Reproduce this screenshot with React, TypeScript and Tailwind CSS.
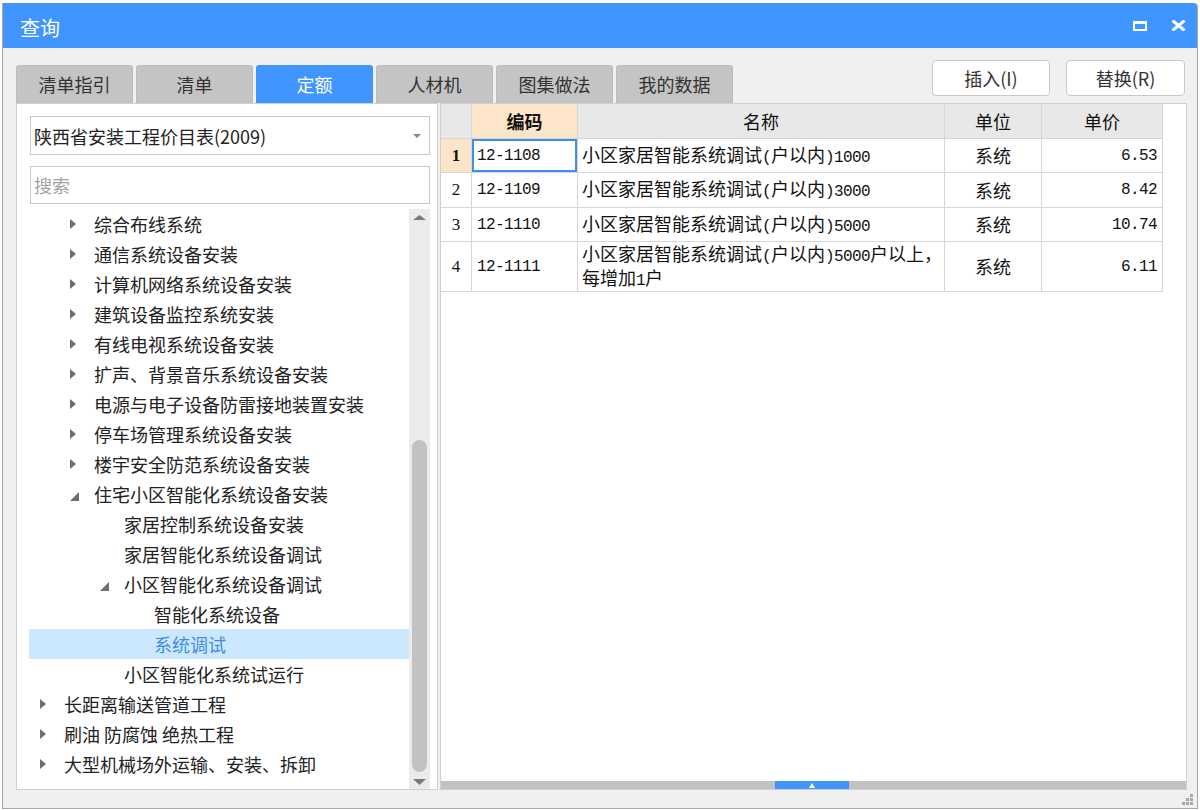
import React from 'react';

// Query dialog: 定额 tab with tree on the left and result grid on the right.

type TreeNode = {
  label: string;
  level: 0 | 1 | 2 | 3;
  state: 'collapsed' | 'expanded' | 'leaf';
  selected?: boolean;
};

const TABS = ['清单指引', '清单', '定额', '人材机', '图集做法', '我的数据'];
const ACTIVE_TAB = 2;

const TREE: TreeNode[] = [
  { label: '综合布线系统', level: 1, state: 'collapsed' },
  { label: '通信系统设备安装', level: 1, state: 'collapsed' },
  { label: '计算机网络系统设备安装', level: 1, state: 'collapsed' },
  { label: '建筑设备监控系统安装', level: 1, state: 'collapsed' },
  { label: '有线电视系统设备安装', level: 1, state: 'collapsed' },
  { label: '扩声、背景音乐系统设备安装', level: 1, state: 'collapsed' },
  { label: '电源与电子设备防雷接地装置安装', level: 1, state: 'collapsed' },
  { label: '停车场管理系统设备安装', level: 1, state: 'collapsed' },
  { label: '楼宇安全防范系统设备安装', level: 1, state: 'collapsed' },
  { label: '住宅小区智能化系统设备安装', level: 1, state: 'expanded' },
  { label: '家居控制系统设备安装', level: 2, state: 'leaf' },
  { label: '家居智能化系统设备调试', level: 2, state: 'leaf' },
  { label: '小区智能化系统设备调试', level: 2, state: 'expanded' },
  { label: '智能化系统设备', level: 3, state: 'leaf' },
  { label: '系统调试', level: 3, state: 'leaf', selected: true },
  { label: '小区智能化系统试运行', level: 2, state: 'leaf' },
  { label: '长距离输送管道工程', level: 0, state: 'collapsed' },
  { label: '刷油 防腐蚀 绝热工程', level: 0, state: 'collapsed' },
  { label: '大型机械场外运输、安装、拆卸', level: 0, state: 'collapsed' },
];

const INDENT = ['pl-[11px]', 'pl-[41px]', 'pl-[71px]', 'pl-[101px]'];

const ROWS = [
  { no: '1', code: '12-1108', name: ['小区家居智能系统调试(户以内)1000'], unit: '系统', price: '6.53', h: 'h-[34px]' },
  { no: '2', code: '12-1109', name: ['小区家居智能系统调试(户以内)3000'], unit: '系统', price: '8.42', h: 'h-[35px]' },
  { no: '3', code: '12-1110', name: ['小区家居智能系统调试(户以内)5000'], unit: '系统', price: '10.74', h: 'h-[34px]' },
  { no: '4', code: '12-1111', name: ['小区家居智能系统调试(户以内)5000户以上，', '每增加1户'], unit: '系统', price: '6.11', h: 'h-[50px]' },
];

// SimSun-style mix: half-width latin runs, full-width CJK
function Mix({ text }: { text: string }) {
  const parts = text.split(/([\x20-\x7e]+)/).filter(Boolean);
  return (
    <>
      {parts.map((p, i) =>
        /^[\x20-\x7e]+$/.test(p) ? (
          <span key={i} className="font-['Liberation_Mono',monospace] text-[16px] tracking-[-0.6px]">{p}</span>
        ) : (
          <span key={i}>{p}</span>
        ),
      )}
    </>
  );
}

function Caret({ state }: { state: TreeNode['state'] }) {
  if (state === 'collapsed') {
    return (
      <svg width="6" height="10" viewBox="0 0 6 10">
        <path d="M0 0 L6 5 L0 10 Z" fill="#6e6e6e" />
      </svg>
    );
  }
  if (state === 'expanded') {
    return (
      <svg width="9" height="9" viewBox="0 0 9 9" className="mt-[5px]">
        <path d="M9 0 L9 9 L0 9 Z" fill="#6e6e6e" />
      </svg>
    );
  }
  return null;
}

function TitleBar() {
  return (
    <div className="h-[45px] bg-[#4096fe] flex items-center pl-[17px] pr-[11px] rounded-tr-[4px]">
      <span className="text-white text-[20px] leading-none mt-[4px]">查询</span>
      <div className="ml-auto flex items-center gap-[24px]">
        <div className="w-[14px] h-[10px] border-2 border-t-[3px] border-white" />
        <svg width="15" height="11" viewBox="0 0 15 11">
          <path d="M1.5 0.5 L13.5 10.5 M13.5 0.5 L1.5 10.5" stroke="#fff" strokeWidth="3" />
        </svg>
      </div>
    </div>
  );
}

function Tabs() {
  return (
    <div className="h-[55px] flex items-end mr-[2px]">
      <div className="flex gap-[3px]">
        {TABS.map((t, i) => (
          <div
            key={t}
            className={`w-[117px] h-[38px] rounded-t-[3px] flex items-center justify-center text-[18px] leading-none pb-[1px] ${
              i === ACTIVE_TAB ? 'bg-[#4096fe] text-white' : 'bg-[#c4c4c4] text-[#333] border border-b-0 border-[#bdbdbd]'
            }`}
          >
            {t}
          </div>
        ))}
      </div>
      <div className="ml-auto self-start mt-[12px] flex gap-[16px]">
        <button className="w-[118px] h-[36px] bg-white border border-[#c9c9c9] rounded-[4px] text-[18px] text-[#333] leading-none">
          插入(I)
        </button>
        <button className="w-[119px] h-[36px] bg-white border border-[#c9c9c9] rounded-[4px] text-[18px] text-[#333] leading-none">
          替换(R)
        </button>
      </div>
    </div>
  );
}

function Scrollbar() {
  return (
    <div className="w-[21px] h-full bg-[#ebebeb] flex flex-col">
      <div className="h-[20px] flex justify-center pt-[6px]">
        <svg width="13" height="5" viewBox="0 0 13 5">
          <path d="M0 5 L6.5 0 L13 5 Z" fill="#7a7a7a" />
        </svg>
      </div>
      <div className="flex-1 flex flex-col justify-end items-center">
        <div className="w-[15px] h-[332px] rounded-full bg-[#c2c2c2]" />
      </div>
      <div className="h-[17px] flex justify-center pt-[7px]">
        <svg width="13" height="6" viewBox="0 0 13 6">
          <path d="M0 0 L13 0 L6.5 6 Z" fill="#7a7a7a" />
        </svg>
      </div>
    </div>
  );
}

function LeftPanel() {
  return (
    <div className="w-[422px] h-full bg-white border border-[#cfcfcf] flex flex-col pl-[12px]">
      <div className="ml-[1px] mt-[12px] w-[400px] h-[39px] border border-[#c8c8c8] flex items-center pl-[3px] pr-[8px]">
        <span className="text-[18px] text-[#222] leading-none">陕西省安装工程价目表(2009)</span>
        <svg width="8" height="4" viewBox="0 0 8 4" className="ml-auto">
          <path d="M0 0 L8 0 L4 4 Z" fill="#888" />
        </svg>
      </div>
      <div className="ml-[1px] mt-[11px] w-[400px] h-[38px] border border-[#c8c8c8] flex items-center pl-[3px]">
        <span className="text-[18px] text-[#a3a3a3] leading-none">搜索</span>
      </div>
      <div className="mt-[5px] flex-1 flex min-h-0">
        <div className="w-[380px]">
          {TREE.map((n) => (
            <div
              key={n.label}
              className={`h-[30px] flex items-center ${INDENT[n.level]} ${n.selected ? 'bg-[#cce8ff]' : ''}`}
            >
              <div className="w-[24px] flex items-center">
                <Caret state={n.state} />
              </div>
              <span className={`text-[18px] leading-none ${n.selected ? 'text-[#3f8de6]' : 'text-[#222]'}`}>
                {n.label}
              </span>
            </div>
          ))}
        </div>
        <Scrollbar />
      </div>
    </div>
  );
}

const GRID = 'grid grid-cols-[31px_106px_367px_97px_121px] w-[722px]';
const CELL = 'border-r border-b border-[#d6d6d6] flex items-center';

function ResultGrid() {
  return (
    <div className="flex-1 h-full bg-white border border-[#cfcfcf] flex flex-col">
      <div className="flex-1 text-[18px] text-[#111]">
        <div className={`${GRID} h-[35px]`}>
          <div className={`${CELL} bg-[#e8e8e8]`} />
          <div className={`${CELL} bg-[#fde5c9] justify-center font-bold`}>编码</div>
          <div className={`${CELL} bg-[#e8e8e8] justify-center`}>名称</div>
          <div className={`${CELL} bg-[#e8e8e8] justify-center`}>单位</div>
          <div className={`${CELL} bg-[#e8e8e8] justify-center`}>单价</div>
        </div>
        {ROWS.map((r, i) => (
          <div key={r.code} className={`${GRID} ${r.h}`}>
            <div
              className={`${CELL} justify-center font-['Liberation_Serif',serif] text-[17px] ${
                i === 0 ? 'bg-[#fde5c9] font-bold' : ''
              }`}
            >
              {r.no}
            </div>
            <div className={`${CELL} pl-[5px] ${i === 0 ? 'ring-2 ring-inset ring-[#3f8eea]' : ''}`}>
              <Mix text={r.code} />
            </div>
            <div className={`${CELL} pl-[4px]`}>
              <div className="leading-[20px] whitespace-nowrap">
                {r.name.map((line) => (
                  <div key={line}>
                    <Mix text={line} />
                  </div>
                ))}
              </div>
            </div>
            <div className={`${CELL} justify-center`}>{r.unit}</div>
            <div className={`${CELL} justify-end pr-[5px]`}>
              <Mix text={r.price} />
            </div>
          </div>
        ))}
      </div>
      <div className="h-[8px] bg-[#c2c2c2] flex">
        <div className="ml-[334px] w-[74px] h-full bg-[#4096fe] flex items-center justify-center">
          <svg width="6" height="5" viewBox="0 0 6 5">
            <path d="M0 5 L3 0 L6 5 Z" fill="#fff" />
          </svg>
        </div>
      </div>
    </div>
  );
}

function ResizeGrip() {
  const dots = [
    [8, 0],
    [4, 4],
    [8, 4],
    [0, 8],
    [4, 8],
    [8, 8],
  ];
  return (
    <svg width="11" height="11" viewBox="0 0 11 11">
      {dots.map(([x, y]) => (
        <rect key={`${x}-${y}`} x={x} y={y} width="3" height="3" fill="#a8a8a8" />
      ))}
    </svg>
  );
}

export default function App() {
  return (
    <div className="w-[1200px] h-[810px] bg-white pt-[3px] pl-[2px] overflow-hidden font-['Noto_Sans_CJK_SC','Noto_Sans',sans-serif]">
      <div className="w-[1196px] h-[806px] border-l border-r border-b border-[#a8a8a8] bg-[#f0f0f0] flex flex-col rounded-tr-[4px]">
        <TitleBar />
        <div className="flex-1 flex flex-col pl-[13px] pr-[10px]">
          <Tabs />
          <div className="h-[687px] flex gap-[2px]">
            <LeftPanel />
            <ResultGrid />
          </div>
          <div className="flex-1 flex justify-end items-end pb-[3px] -mr-[6px]">
            <ResizeGrip />
          </div>
        </div>
      </div>
    </div>
  );
}
